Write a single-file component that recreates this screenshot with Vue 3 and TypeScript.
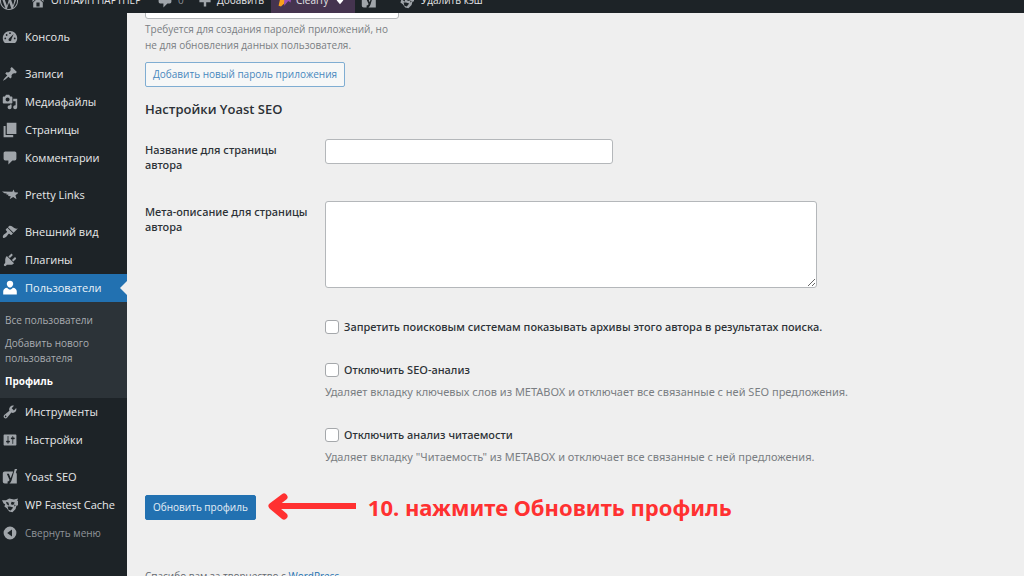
<script setup lang="ts">
import { ref } from 'vue'

interface MenuItem {
  label: string
  icon: string
  gap?: boolean
  active?: boolean
  children?: { label: string; current?: boolean }[]
}

const icons: Record<string, string> = {
  dashboard:
    'M3.8 17.5C2.1 16.200 1 14 1 11.500 1 6.500 5 2.500 10 2.500s9 4 9 9c0 2.500-1.100 4.700-2.800 6zM8.900 5.300a1.100 1.100 0 1 0 2.200 0 1.100 1.100 0 1 0-2.200 0zM4.700 7.500a1.100 1.100 0 1 0 2.200 0 1.100 1.100 0 1 0-2.200 0zM3 11.800a1.100 1.100 0 1 0 2.200 0 1.100 1.100 0 1 0-2.200 0zM14.800 11.800a1.100 1.100 0 1 0 2.200 0 1.100 1.100 0 1 0-2.200 0zM14.600 6.200l-5.500 5.300c-1.300.9-1.400 3 .2 3.600 1.500.6 2.900-.8 2.400-2.300z',
  post: 'M10.44 3.02l1.82-1.82 6.36 6.35-1.83 1.82c-1.05-.68-2.48-.57-3.41.36l-.75.75c-.92.93-1.04 2.35-.35 3.41l-1.83 1.82-2.41-2.41-2.8 2.79c-.42.42-3.38 2.71-3.8 2.29s1.86-3.39 2.28-3.81l2.79-2.79L4.1 9.36l1.83-1.82c1.05.69 2.48.57 3.4-.36l.75-.75c.93-.92 1.05-2.35.36-3.41z',
  media:
    'M13 11V4c0-.55-.45-1-1-1h-1.67L9 1H5L3.67 3H2c-.55 0-1 .45-1 1v7c0 .55.45 1 1 1h10c.55 0 1-.45 1-1zM7 4.5c1.38 0 2.5 1.12 2.5 2.5S8.38 9.5 7 9.5 4.5 8.38 4.5 7 5.62 4.5 7 4.5zM14 6h5v10.5c0 1.38-1.12 2.5-2.5 2.5S14 17.88 14 16.5s1.12-2.5 2.5-2.5c.17 0 .34.02.5.05V9h-3V6zm-4 8.05V13h2v3.5c0 1.38-1.12 2.5-2.5 2.5S7 17.88 7 16.5 8.12 14 9.5 14c.17 0 .34.02.5.05z',
  page: 'M6 15V1h12v14zM5 16.300h9V19H2V5h2.500v11.300z',
  comments:
    'M4 2h12c1.1 0 2 .9 2 2v7c0 1.100-.9 2-2 2h-3l-5 5v-5H4c-1.100 0-2-.9-2-2V4c0-1.100.9-2 2-2z',
  star: 'M0 5.500l13 .5 1.500-3 1.300 3.700 5.200.3-4.200 3.200 1.400 5-4.200-2.800-4.500 2.800 1.400-3.700-3.400-.3.800-1.400-3-.3.700-1.300-3-.4z',
  appearance:
    'M14.48 11.06L7.41 3.99l1.5-1.5c.5-.56 2.3-.47 3.51.32 1.21.8 1.43 1.28 2.91 2.1 1.18.64 2.45 1.26 4.45.85zm-.71.71L6.7 4.7 4.93 6.47c-.39.39-.39 1.02 0 1.41l1.06 1.06c.39.39.39 1.03 0 1.42-.6.6-1.43 1.11-2.21 1.69-.35.26-.7.53-1.01.84C1.43 14.23.4 16.08 1.4 17.07c.99 1 2.84-.03 4.18-1.36.31-.31.58-.66.85-1.02.57-.78 1.08-1.61 1.69-2.21.39-.39 1.02-.39 1.41 0l1.06 1.06c.39.39 1.02.39 1.41 0z',
  plugins:
    'M13.11 4.36L9.87 7.6 8 5.73l3.24-3.24c.35-.34 1.05-.2 1.56.32.52.51.66 1.21.31 1.55zm-8 1.77l.91-1.12 9.01 9.01-1.19.84c-.71.71-2.63 1.16-3.82 1.16H6.14L4.9 17.26c-.59.59-1.54.59-2.12 0-.59-.58-.59-1.53 0-2.12l1.24-1.24v-3.88c0-1.13.4-3.19 1.09-3.89zm7.26 3.97l3.24-3.24c.34-.35 1.04-.21 1.55.31.52.51.66 1.21.31 1.55l-3.24 3.25z',
  users:
    'M10 9.500C7 9.500 6 6 6 4.800 6 2.500 7.700 1 10 1s4 1.500 4 3.800C14 6 13 9.500 10 9.500zM6.500 9.800C7.500 11.300 8.700 12 10 12s2.500-.7 3.500-2.200c3 .2 5 2.200 5 4.700V18h-17v-3.500c0-2.500 2-4.500 5-4.700z',
  tools:
    'M16.68 9.77c-1.34 1.34-3.3 1.67-4.95.99l-5.41 6.52c-.99.99-2.59.99-3.58 0s-.99-2.59 0-3.57l6.52-5.42c-.68-1.65-.35-3.61.99-4.95 1.28-1.28 3.12-1.62 4.72-1.06l-2.89 2.89 2.82 2.82 2.86-2.87c.53 1.58.18 3.39-1.08 4.65zM3.81 16.21c.4.39 1.04.39 1.43 0 .4-.4.4-1.04 0-1.43-.39-.4-1.03-.4-1.43 0-.39.39-.39 1.03 0 1.43z',
  settings:
    'M18 16V4c0-.55-.45-1-1-1H3c-.55 0-1 .45-1 1v12c0 .55.45 1 1 1h14c.55 0 1-.45 1-1zM8 11h1c.55 0 1 .45 1 1s-.45 1-1 1H8v1.5c0 .28-.22.5-.5.5s-.5-.22-.5-.5V13H6c-.55 0-1-.45-1-1s.45-1 1-1h1V5.5c0-.28.22-.5.5-.5s.5.22.5.5V11zm5-2h-1c-.55 0-1-.45-1-1s.45-1 1-1h1V5.5c0-.28.22-.5.5-.5s.5.22.5.5V7h1c.55 0 1 .45 1 1s-.45 1-1 1h-1v5.5c0 .28-.22.5-.5.5s-.5-.22-.5-.5V9z',
  yoast:
    'M3.500 3H14l-3.200 8.500L8.600 6H6l3.300 7.500c.2.900-.4 2-2.300 2.200V18H3.500C2 18 1 17 1 15.500v-10C1 4 2 3 3.500 3zM16 0h3l-1.800 4.500C18 5 18.500 5.500 18.500 7v11H9.300c1.300-.7 2-2 2.600-3.500z',
  cache:
    'M0 4l5 0 4-2 6 1 5-1-1 3 3 0-2 3 1 2-3 1-1 4-4 4-4-1-3-4-3-2 1-3-2-1zM5 6l1 3 3 2-1-4zM12 6l-1 3 3 1 2-3zM7 12l1 4 3 1 3-4-4-1zM16 9l-1 3 2-1z',
  collapse:
    'M10 2a8 8 0 1 0 0 16 8 8 0 1 0 0-16zM12.500 5.500v9L6.500 10z',
  wordpress:
    'M20 10c0-5.51-4.49-10-10-10C4.48 0 0 4.49 0 10c0 5.52 4.48 10 10 10 5.51 0 10-4.48 10-10zM7.78 15.37L4.37 6.22c.55-.02 1.17-.08 1.17-.08.5-.06.44-1.13-.06-1.11 0 0-1.45.11-2.37.11-.18 0-.37 0-.58-.01C4.12 2.69 6.87 1.11 10 1.11c2.33 0 4.45.87 6.05 2.34-.68-.11-1.65.39-1.65 1.58 0 .74.45 1.36.9 2.1.35.61.55 1.36.55 2.46 0 1.49-1.4 5-1.4 5l-3.03-8.37c.54-.02.82-.17.82-.17.5-.05.44-1.25-.06-1.22 0 0-1.44.12-2.38.12-.87 0-2.33-.12-2.33-.12-.5-.03-.56 1.2-.06 1.22l.92.08 1.26 3.41zM17.41 10c.24-.64.74-1.87.43-4.25.7 1.29 1.05 2.71 1.05 4.25 0 3.29-1.73 6.24-4.4 7.78.97-2.59 1.94-5.2 2.92-7.78zM6.1 18.09C3.12 16.65 1.11 13.53 1.11 10c0-1.3.23-2.48.72-3.59C3.25 10.3 4.67 14.2 6.1 18.09zm4.03-6.63l2.58 6.98c-.86.29-1.76.45-2.71.45-.79 0-1.57-.11-2.29-.33.81-2.38 1.62-4.74 2.42-7.1z',
  home: 'M16 8.5l1.53 1.53-1.06 1.06L10 4.6l-6.47 6.49-1.06-1.06L10 2.5l4 4v-2h2v4zm-6-2.46l6 5.99V18H4v-5.97zM12 17v-5H8v5h4z',
  plus: 'M8.500 3h3v5.500H17v3h-5.500V17h-3v-5.500H3v-3h5.500z',
}

const menu: MenuItem[] = [
  { label: 'Консоль', icon: 'dashboard' },
  { label: 'Записи', icon: 'post', gap: true },
  { label: 'Медиафайлы', icon: 'media' },
  { label: 'Страницы', icon: 'page' },
  { label: 'Комментарии', icon: 'comments' },
  { label: 'Pretty Links', icon: 'star', gap: true },
  { label: 'Внешний вид', icon: 'appearance', gap: true },
  { label: 'Плагины', icon: 'plugins' },
  {
    label: 'Пользователи',
    icon: 'users',
    active: true,
    children: [
      { label: 'Все пользователи' },
      { label: 'Добавить нового пользователя' },
      { label: 'Профиль', current: true },
    ],
  },
  { label: 'Инструменты', icon: 'tools' },
  { label: 'Настройки', icon: 'settings' },
  { label: 'Yoast SEO', icon: 'yoast', gap: true },
  { label: 'WP Fastest Cache', icon: 'cache' },
]

const appName = ref('')
const authorTitle = ref('')
const authorDescription = ref('')
const noIndex = ref(false)
const noSeo = ref(false)
const noReadability = ref(false)
</script>

<template>
  <div class="admin">
    <header class="bar">
      <nav class="bar-items" aria-label="Панель">
        <a href="#" class="bar-logo" aria-label="WordPress">
          <svg class="icon" viewBox="0 0 20 20"><path :d="icons.wordpress" /></svg>
        </a>
        <a href="#" class="bar-site">
          <svg class="icon" viewBox="0 0 20 20"><path :d="icons.home" fill-rule="evenodd" /></svg>
          ОНЛАЙН ПАРТНЕР
        </a>
        <a href="#" class="bar-comments">
          <svg class="icon" viewBox="0 0 20 20"><path :d="icons.comments" /></svg>
          <span>0</span>
        </a>
        <a href="#" class="bar-add">
          <svg class="icon" viewBox="0 0 20 20"><path :d="icons.plus" /></svg>
          Добавить
        </a>
        <a href="#" class="bar-clearfy">
          <svg class="icon" viewBox="0 0 20 20">
            <path d="M4 7l7 1-2 5-4 4-3-1z" fill="#f9a11b" />
            <path d="M9 8l9-4-1 8-3-2-5 6z" fill="#9b51b5" />
          </svg>
          Clearfy
          <svg class="heart" viewBox="0 0 10 10"><path d="M5 9L1 4.500Q1 1 3 1T5 3Q5 1 7 1T9 4.500z" /></svg>
        </a>
        <a href="#" class="bar-yoast" aria-label="Yoast SEO">
          <svg class="icon" viewBox="0 0 20 20"><path :d="icons.yoast" fill-rule="evenodd" /></svg>
        </a>
        <a href="#" class="bar-cache">
          <svg class="icon" viewBox="0 0 20 20"><path :d="icons.cache" fill-rule="evenodd" /></svg>
          Удалить кэш
        </a>
      </nav>
    </header>

    <div class="body">
      <aside class="side">
        <nav aria-label="Меню">
          <ul class="menu">
            <li v-for="item in menu" :key="item.label" :class="{ gap: item.gap }">
              <a href="#" class="item" :class="{ active: item.active }">
                <svg class="icon" viewBox="0 0 20 20">
                  <path :d="icons[item.icon]" fill-rule="evenodd" />
                </svg>
                {{ item.label }}
              </a>
              <ul v-if="item.children" class="sub">
                <li v-for="child in item.children" :key="child.label">
                  <a href="#" :class="{ current: child.current }">{{ child.label }}</a>
                </li>
              </ul>
            </li>
          </ul>
          <button type="button" class="item collapse">
            <svg class="icon" viewBox="0 0 20 20"><path :d="icons.collapse" fill-rule="evenodd" /></svg>
            Свернуть меню
          </button>
        </nav>
      </aside>

      <main class="content">
        <div class="app-name">
          <input v-model="appName" type="text" class="field" aria-label="Имя приложения" aria-describedby="app-hint" />
        </div>
        <p id="app-hint" class="hint narrow">
          Требуется для создания паролей приложений, но не для обновления данных пользователя.
        </p>
        <button type="button" class="btn outline">Добавить новый пароль приложения</button>

        <h2>Настройки Yoast SEO</h2>

        <form @submit.prevent>
          <div class="row">
            <label for="author-title" class="name">Название для страницы автора</label>
            <input id="author-title" v-model="authorTitle" type="text" class="field title-field" />
          </div>
          <div class="row">
            <label for="author-desc" class="name">Мета-описание для страницы автора</label>
            <textarea id="author-desc" v-model="authorDescription" class="field area"></textarea>
          </div>
          <div class="checks">
            <div class="check">
              <label><input v-model="noIndex" type="checkbox" />Запретить поисковым системам показывать архивы этого автора в результатах поиска.</label>
            </div>
            <div class="check">
              <label><input v-model="noSeo" type="checkbox" />Отключить SEO-анализ</label>
              <p class="hint">Удаляет вкладку ключевых слов из METABOX и отключает все связанные с ней SEO предложения.</p>
            </div>
            <div class="check">
              <label><input v-model="noReadability" type="checkbox" />Отключить анализ читаемости</label>
              <p class="hint">Удаляет вкладку "Читаемость" из METABOX и отключает все связанные с ней предложения.</p>
            </div>
          </div>
          <div class="submit">
            <button type="submit" class="btn primary">Обновить профиль</button>
            <svg class="arrow" viewBox="0 0 88 28" aria-hidden="true">
              <path d="M88 13H5" />
              <path d="M16 4L4 13L16 23" class="head" />
            </svg>
            <strong class="note">10. нажмите Обновить профиль</strong>
          </div>
        </form>

        <footer>Спасибо вам за творчество с <a href="#">WordPress</a>.</footer>
      </main>
    </div>
  </div>
</template>

<style>
html,
body {
  margin: 0;
  background: #efefef;
}
</style>

<style scoped>
.admin {
  height: 100vh;
  overflow: hidden;
  display: flex;
  flex-direction: column;
  color: #2c3136;
  background: #efefef;
  font-family: 'Open Sans', 'Noto Sans', sans-serif;
  font-size: 10px;
  line-height: 15px;
}
.admin *,
.admin *::before {
  box-sizing: border-box;
}
a {
  color: inherit;
  text-decoration: none;
}
ul {
  list-style: none;
  margin: 0;
  padding: 0;
}
p,
h2 {
  margin: 0;
}
button,
input,
textarea {
  font: inherit;
}
.icon {
  width: 16px;
  height: 16px;
  flex: none;
  fill: #a0a5aa;
}

.bar {
  height: 13px;
  flex: none;
  display: flex;
  align-items: flex-end;
  background: #1d2327;
  color: #e4e5e6;
}
.bar-items {
  display: flex;
  height: 25px;
}
.bar-items a {
  display: flex;
  align-items: center;
  flex: none;
  white-space: nowrap;
}
.bar-logo {
  width: 30px;
}
.bar-logo .icon {
  width: 18px;
  height: 18px;
}
.bar-site {
  gap: 5px;
  width: 127px;
}
.bar-comments {
  gap: 5px;
  width: 40px;
  color: #8c9196;
}
.bar-add {
  gap: 4px;
  width: 74px;
}
.bar-clearfy {
  gap: 3px;
  width: 84px;
  padding-left: 6px;
  background: #45344f;
}
.heart {
  width: 8px;
  height: 8px;
  margin-left: 5px;
  fill: #fff;
}
.bar-yoast {
  width: 43px;
  padding-left: 6px;
}
.bar-cache {
  gap: 7px;
}

.body {
  flex: 1;
  display: flex;
  min-height: 0;
}
.side {
  width: 127px;
  flex: none;
  padding-top: 10px;
  background: #1d2327;
}
.gap {
  padding-top: 9px;
}
.item {
  display: flex;
  align-items: center;
  gap: 7px;
  width: 100%;
  height: 28px;
  padding: 0 0 1px 2px;
  border: 0;
  background: none;
  color: #e8e9ea;
  font-size: 11px;
  white-space: nowrap;
  text-align: left;
}
.active {
  position: relative;
  background: #2271b1;
  color: #e9f1f7;
}
.active .icon {
  fill: #fff;
}
.active::before {
  content: '';
  position: absolute;
  right: 0;
  top: 7px;
  border: 7px solid transparent;
  border-left: 0;
  border-right-color: #efefef;
}
.sub {
  padding: 7px 0 5px;
  background: #2c3338;
  color: #a9adb1;
}
.sub a {
  display: block;
  padding: 4px 20px 4px 5px;
}
.sub .current {
  color: #fff;
  font-weight: 700;
}
.collapse {
  padding-bottom: 0;
  color: #8f9499;
  font-size: 10px;
}

.content {
  flex: 1;
  min-width: 0;
  overflow: hidden;
  padding: 0 18px;
}
.field {
  display: block;
  height: 25px;
  padding: 0 7px;
  border: 1px solid #b4b7ba;
  border-radius: 3px;
  background: #fff;
}
.app-name {
  height: 6px;
  display: flex;
  align-items: flex-end;
}
.app-name .field {
  width: 254px;
}
.hint {
  color: #7a7e83;
  font-family: 'Noto Sans', 'Open Sans', sans-serif;
  font-size: 11px;
}
.narrow {
  max-width: 254px;
  padding-top: 2px;
  font-family: inherit;
  font-size: 10px;
  line-height: 16px;
}
.btn {
  height: 25px;
  padding: 0 7px;
  border-radius: 2px;
  border: 1px solid #2271b1;
  white-space: nowrap;
}
.outline {
  display: block;
  margin-top: 9px;
  border-color: #7fadd2;
  background: #f6f7f7;
  color: #4887bd;
}
.primary {
  background: #2271b1;
  color: #e6eff6;
}
h2 {
  margin-top: 13px;
  font-size: 13px;
  font-weight: 600;
  line-height: 18px;
}
form {
  padding-top: 21px;
}
.row {
  display: grid;
  grid-template-columns: 180px 1fr;
  margin-bottom: 29px;
}
.name {
  padding: 3px 14px 0 0;
}
.name,
.check label {
  font-family: 'Noto Sans', 'Open Sans', sans-serif;
  font-size: 11px;
  font-weight: 500;
}
.title-field {
  width: 100%;
  max-width: 288px;
}
.area {
  width: 100%;
  max-width: 492px;
  height: 87px;
  resize: both;
}
.checks {
  display: flex;
  flex-direction: column;
  gap: 28px;
  margin: 31px 0 0 180px;
}
.row:has(.area) {
  margin-bottom: 0;
}
.check label {
  display: flex;
  align-items: center;
  gap: 5px;
}
.check .hint {
  padding-top: 7px;
}
.check input {
  appearance: none;
  width: 14px;
  height: 14px;
  flex: none;
  margin: 0;
  border: 1px solid #a5a8ab;
  border-radius: 3px;
  background: #fff;
}
.check input:checked {
  background: #2271b1;
}
.submit {
  display: flex;
  align-items: center;
  margin-top: 29px;
}
.arrow {
  width: 88px;
  height: 28px;
  margin: 0 12px;
  fill: none;
  stroke: #ff3131;
  stroke-width: 6;
}
.head {
  stroke-width: 7;
  stroke-linecap: round;
  stroke-linejoin: round;
}
.note {
  color: #ff3131;
  font-family: 'Noto Sans', 'Open Sans', sans-serif;
  font-size: 22px;
  line-height: 28px;
  font-weight: 700;
}
footer {
  margin-top: 48px;
  color: #646970;
}
footer a {
  color: #2271b1;
}
</style>
